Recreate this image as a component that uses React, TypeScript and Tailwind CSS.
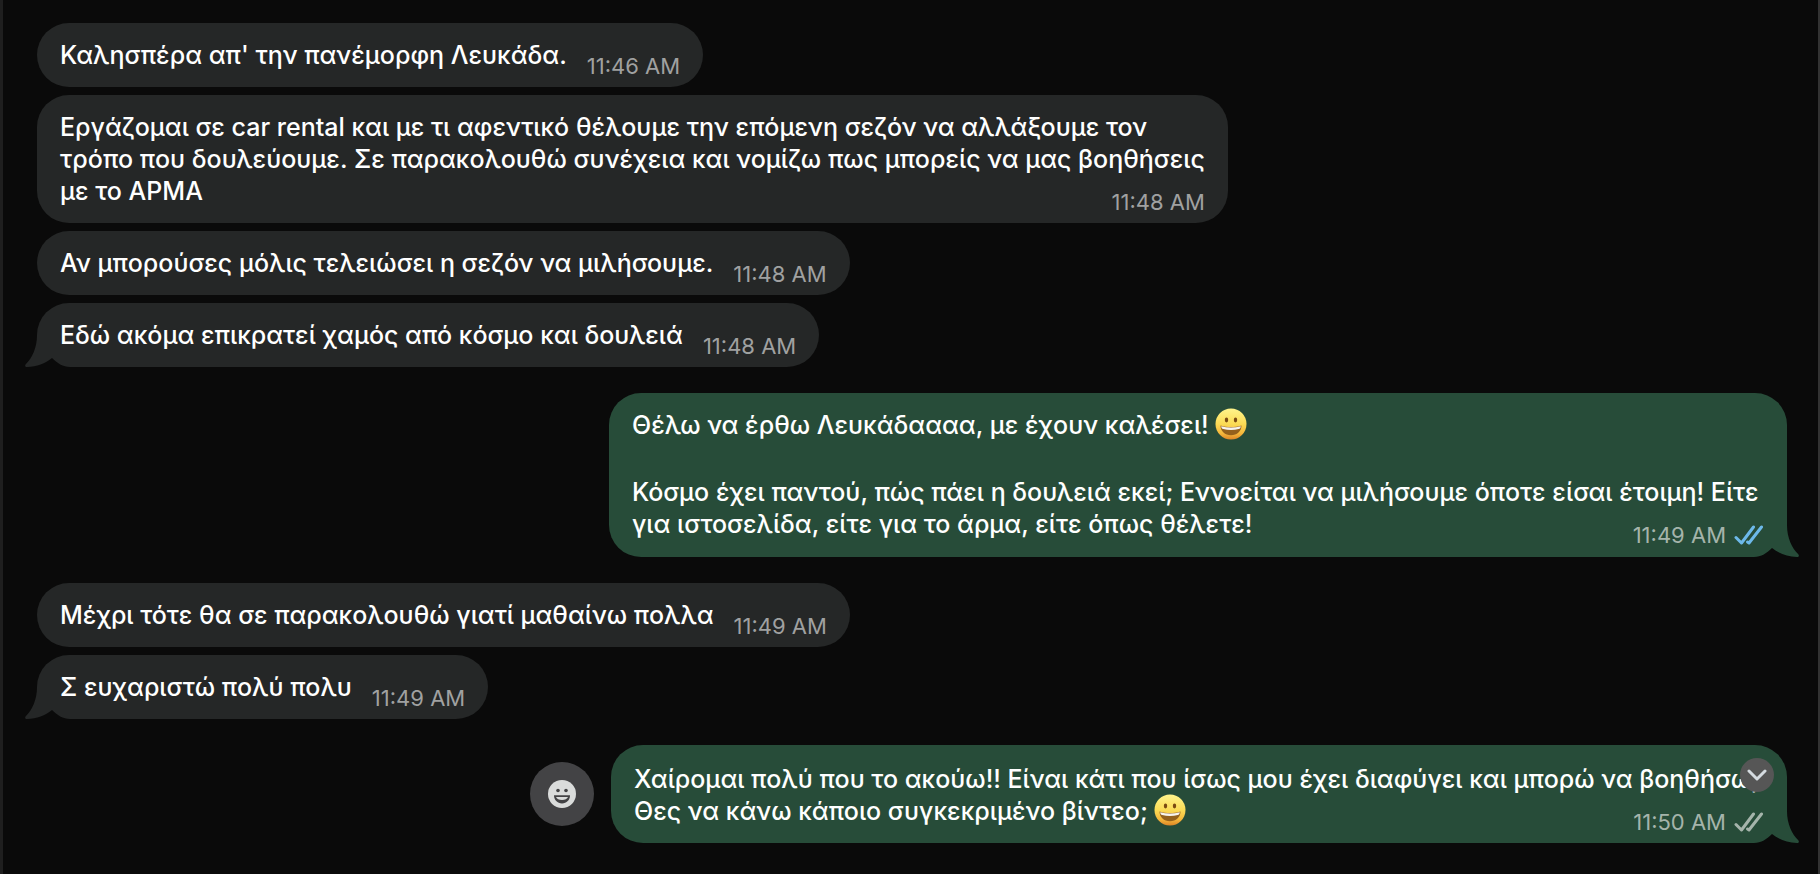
import React from "react";

const GrinEmoji = () => (
  <svg
    role="img"
    aria-label="😀"
    viewBox="0 0 32 32"
    className="inline-block align-baseline w-8 h-8 -mt-1 -mb-1.5"
  >
    <defs>
      <linearGradient id="face" x1="0" y1="0" x2="0" y2="1">
        <stop offset="0" stopColor="#fff48c" />
        <stop offset="0.5" stopColor="#fbdb55" />
        <stop offset="0.8" stopColor="#f5b83c" />
        <stop offset="1" stopColor="#dd8426" />
      </linearGradient>
    </defs>
    <circle cx="16" cy="16" r="15.500" fill="url(#face)" />
    <ellipse cx="11.500" cy="12" rx="1.700" ry="2.400" fill="#7a4a12" />
    <ellipse cx="20.500" cy="12" rx="1.700" ry="2.400" fill="#7a4a12" />
    <path d="M5.500 17.500c6.500 2 14.500 2 21 0c0 5.800-4.500 9.700-10.500 9.700s-10.500-3.900-10.500-9.700z" fill="#94601c" />
    <path d="M6.200 18.200c6.300 1.800 13.300 1.800 19.600 0c0 1.700-.9 2.500-2 2.800c-4.800 1.200-10.800 1.200-15.600 0c-1.100-.3-2-1.100-2-2.800z" fill="#f6f3ee" />
  </svg>
);

const Ticks = ({ read }: { read?: boolean }) => (
  <svg
    viewBox="0 0 30 20"
    fill="none"
    strokeWidth="3"
    strokeLinecap="round"
    strokeLinejoin="round"
    className={read ? "w-[30px] h-5 stroke-[#6db9ea]" : "w-[30px] h-5 stroke-[#a5b4ab]"}
  >
    <path d="M2 12.500L7.500 18L19.500 2" />
    <path d="M13.500 17L15 18L27.500 2" />
  </svg>
);

const Tail = ({ mine }: { mine?: boolean }) => (
  <svg
    viewBox="0 0 45 32"
    className={
      mine
        ? "absolute bottom-0 -right-3 w-[45px] h-8 -scale-x-100 text-[#274c39]"
        : "absolute bottom-0 -left-3 w-[45px] h-8 text-[#252727]"
    }
  >
    <path d="M0 10H45V32H0z" fill="#0a0a0a" />
    <path
      d="M12 0C12 13 7 23 .7 29.300C-.5 30.800 .3 32 2 32C12 31.800 20 28.500 27 23C32 28 38 32 45 32V0z"
      fill="currentColor"
    />
  </svg>
);

type BubbleProps = {
  time: string;
  last: React.ReactNode;
  children?: React.ReactNode;
  mine?: boolean;
  read?: boolean;
  tail?: boolean;
  classes?: string;
};

const Bubble = ({ time, last, children, mine, read, tail, classes = "py-4" }: BubbleProps) => (
  <div
    className={`relative px-[23px] rounded-[32px] text-white text-[25px] leading-8 font-medium whitespace-nowrap ${
      mine ? "bg-[#274c39]" : "bg-[#252727]"
    } ${classes}`}
  >
    {tail && <Tail mine={mine} />}
    <div className="relative">
      {children}
      <div className="flex items-end justify-between gap-5">
        <p>{last}</p>
        <div
          className={`flex items-center gap-2 -mb-[7px] text-[22px] leading-6 font-normal ${
            mine ? "text-[#a5b4ab]" : "text-[#a0a1a1]"
          }`}
        >
          <time>{time}</time>
          {mine && <Ticks read={read} />}
        </div>
      </div>
    </div>
  </div>
);

const App = () => {
  return (
    <main className="min-h-screen bg-[#0a0a0a] border-l-3 border-l-[#1f1f1f] border-r-2 border-r-[#333333] pl-[34px] pr-[31px] pt-[23px] pb-[31px] overflow-hidden font-['Inter','Liberation_Sans',sans-serif]">
      <div className="flex flex-col items-start gap-2">
        <Bubble time="11:46 AM" last="Καλησπέρα απ' την πανέμορφη Λευκάδα." />
        <Bubble time="11:48 AM" last="με το ΑΡΜΑ">
          <p>Εργάζομαι σε car rental και με τι αφεντικό θέλουμε την επόμενη σεζόν να αλλάξουμε τον</p>
          <p>τρόπο που δουλεύουμε. Σε παρακολουθώ συνέχεια και νομίζω πως μπορείς να μας βοηθήσεις</p>
        </Bubble>
        <Bubble time="11:48 AM" last="Αν μπορούσες μόλις τελειώσει η σεζόν να μιλήσουμε." />
        <Bubble time="11:48 AM" last="Εδώ ακόμα επικρατεί χαμός από κόσμο και δουλειά" tail />
      </div>

      <div className="flex justify-end mt-[26px]">
        <Bubble
          time="11:49 AM"
          last="για ιστοσελίδα, είτε για το άρμα, είτε όπως θέλετε!"
          classes="pt-4 pb-[17px] w-[1178px]"
          mine
          read
          tail
        >
          <p className="h-[67px]">
            Θέλω να έρθω Λευκάδαααα, με έχουν καλέσει! <GrinEmoji />
          </p>
          <p>Κόσμο έχει παντού, πώς πάει η δουλειά εκεί; Εννοείται να μιλήσουμε όποτε είσαι έτοιμη! Είτε</p>
        </Bubble>
      </div>

      <div className="flex flex-col items-start gap-2 mt-[26px]">
        <Bubble time="11:49 AM" last="Μέχρι τότε θα σε παρακολουθώ γιατί μαθαίνω πολλα" />
        <Bubble time="11:49 AM" last="Σ ευχαριστώ πολύ πολυ" tail />
      </div>

      <div className="flex justify-end items-center gap-[17px] mt-[26px]">
        <button
          aria-label="React"
          className="w-16 h-16 rounded-full bg-[#434345] flex items-center justify-center"
        >
          <svg viewBox="0 0 28 28" className="w-7 h-7">
            <circle cx="14" cy="14" r="14" fill="#dadcdb" />
            <circle cx="10" cy="10.500" r="1.800" fill="#434345" />
            <circle cx="18" cy="10.500" r="1.800" fill="#434345" />
            <path d="M6 15.300h16c0 4.700-3.400 8.200-8 8.200s-8-3.500-8-8.200z" fill="#434345" />
            <path d="M8 17h12c-.8 1.800-3 3-6 3s-5.200-1.200-6-3z" fill="#dadcdb" />
          </svg>
        </button>
        <div className="relative">
          <Bubble
            time="11:50 AM"
            last={
              <>
                Θες να κάνω κάποιο συγκεκριμένο βίντεο; <GrinEmoji />
              </>
            }
            classes="pt-[18px] pb-4 w-[1176px]"
            mine
            tail
          >
            <p>Χαίρομαι πολύ που το ακούω!! Είναι κάτι που ίσως μου έχει διαφύγει και μπορώ να βοηθήσω;</p>
          </Bubble>
          <button
            aria-label="Scroll to bottom"
            className="absolute top-[13px] right-[13px] w-[34px] h-[34px] rounded-full bg-[#565656] flex items-center justify-center"
          >
            <svg
              viewBox="0 0 20 12"
              fill="none"
              stroke="#d5dbe0"
              strokeWidth="3"
              strokeLinecap="round"
              strokeLinejoin="round"
              className="w-5 h-3"
            >
              <path d="M2 2L10 10L18 2" />
            </svg>
          </button>
        </div>
      </div>
    </main>
  );
};

export default App;
